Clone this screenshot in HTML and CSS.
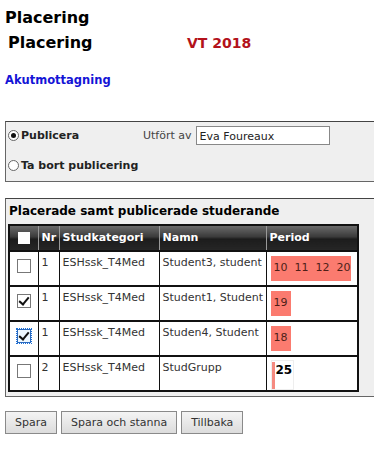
FILE: index.html
```html
<!DOCTYPE html>
<html lang="sv">
  <head>
    <meta charset="UTF-8" />
    <title>Placering</title>
    <link rel="stylesheet" href="styles.css">
  </head>
  <body>
    <h1 class="page-title">Placering</h1>
    <div class="title-row">
      <span class="title">Placering</span>
      <span class="term">VT 2018</span>
    </div>
    <a class="unit" href="#">Akutmottagning</a>

    <!-- Publicering -->
    <div class="box publish">
      <div class="publish-row">
        <label class="radio-label"><span class="radio checked"></span>Publicera</label>
        <label class="done-by">Utfört av <span class="text-input">Eva Foureaux</span></label>
      </div>
      <div class="publish-row">
        <label class="radio-label"><span class="radio"></span>Ta bort publicering</label>
      </div>
    </div>

    <!-- Studerande -->
    <div class="box students">
      <h2 class="box-title">Placerade samt publicerade studerande</h2>
      <table class="grid">
        <colgroup>
          <col class="col-check">
          <col class="col-nr">
          <col class="col-cat">
          <col class="col-name">
          <col class="col-period">
        </colgroup>
        <thead>
          <tr>
            <th class="cell-check"><span class="head-check"></span></th>
            <th>Nr</th>
            <th>Studkategori</th>
            <th>Namn</th>
            <th>Period</th>
          </tr>
        </thead>
        <tbody>
          <tr>
            <td class="cell-check"><span class="check"></span></td>
            <td>1</td>
            <td>ESHssk_T4Med</td>
            <td>Student3, student</td>
            <td class="cell-period"><span class="period wide">10&nbsp; 11&nbsp; 12&nbsp; 20</span></td>
          </tr>
          <tr>
            <td class="cell-check"><span class="check checked"></span></td>
            <td>1</td>
            <td>ESHssk_T4Med</td>
            <td>Student1, Student</td>
            <td class="cell-period"><span class="period">19</span></td>
          </tr>
          <tr>
            <td class="cell-check"><span class="check checked focused"></span></td>
            <td>1</td>
            <td>ESHssk_T4Med</td>
            <td>Studen4, Student</td>
            <td class="cell-period"><span class="period">18</span></td>
          </tr>
          <tr>
            <td class="cell-check"><span class="check"></span></td>
            <td>2</td>
            <td>ESHssk_T4Med</td>
            <td>StudGrupp</td>
            <td class="cell-period"><span class="period group"><i class="bar"></i>25</span></td>
          </tr>
        </tbody>
      </table>
    </div>

    <div class="actions">
      <button class="btn">Spara</button>
      <button class="btn">Spara och stanna</button>
      <button class="btn">Tillbaka</button>
    </div>
  </body>
</html>
```

FILE: styles.css
```css
html {
  overflow: hidden;
}

body {
  margin: 0;
  padding: 5px 0 0 5px;
  font-family: "DejaVu Sans", Verdana, sans-serif;
  font-size: 11px;
  color: #222;
  background: #fff;
}

.page-title {
  margin: 3px 0 0;
  font-size: 16px;
  line-height: 20px;
  color: #000;
}

.title-row {
  display: flex;
  align-items: baseline;
  margin: 5px 0 0 3px;
}

.title {
  width: 179px;
  font-size: 16px;
  font-weight: bold;
  line-height: 20px;
  color: #000;
}

.term {
  font-size: 14px;
  font-weight: bold;
  color: #b3121b;
}

.unit {
  display: block;
  margin-top: 20px;
  font-size: 11.5px;
  font-weight: bold;
  color: #1414d6;
  text-decoration: none;
}

/* boxes */
.box {
  background: #efefef;
  border-top: 1px solid #444;
  border-left: 1px solid #666;
  border-bottom: 1px solid #666;
}

.publish {
  margin-top: 34px;
  height: 61px;
  padding-top: 2px;
  box-sizing: border-box;
}

.publish-row {
  display: flex;
  align-items: center;
  height: 22px;
}

.publish-row + .publish-row {
  margin-top: 8px;
}

.radio-label {
  display: flex;
  align-items: center;
  width: 137px;
  font-weight: bold;
  font-size: 11px;
  color: #222;
}

.radio {
  width: 11px;
  height: 11px;
  margin: 0 2px 0 2px;
  border: 1px solid #666;
  border-radius: 50%;
  background: #fff;
  box-sizing: border-box;
  position: relative;
}

.radio.checked::after {
  content: "";
  position: absolute;
  left: 2px;
  top: 2px;
  width: 5px;
  height: 5px;
  border-radius: 50%;
  background: #111;
}

.done-by {
  display: flex;
  align-items: center;
  gap: 4px;
  color: #444;
}

.text-input {
  display: block;
  width: 134px;
  height: 19px;
  line-height: 19px;
  padding-left: 3px;
  box-sizing: border-box;
  background: #fff;
  border: 1px solid #888;
  color: #222;
}

.students {
  margin-top: 16px;
  padding: 4px 0 4px 2px;
}

.box-title {
  margin: 0 0 4px 1px;
  font-size: 12px;
  line-height: 17px;
  color: #000;
}

/* table */
.grid {
  table-layout: fixed;
  width: 349px;
  border-collapse: collapse;
  border: 2px solid #111;
  background: #fff;
  font-size: 11px;
  line-height: 14px;
}

.col-check { width: 29px; }
.col-nr { width: 21px; }
.col-cat { width: 100px; }
.col-name { width: 107px; }
.col-period { width: 92px; }

.grid thead tr {
  height: 26px;
}

.grid tbody tr {
  height: 35px;
}

.grid th {
  padding: 0 3px;
  text-align: left;
  font-weight: bold;
  color: #fff;
  background: linear-gradient(#6a6a6a 0%, #3a3a3a 45%, #1c1c1c 55%, #262626 100%);
  border-left: 1px solid #999;
  border-bottom: 1px solid #111;
}

.grid th:first-child {
  border-left: none;
}

.grid td {
  padding: 4px 3px 0;
  vertical-align: top;
  color: #333;
  border-left: 1px solid #111;
  border-top: 2px solid #111;
  white-space: nowrap;
  overflow: hidden;
}

.grid td:first-child {
  border-left: none;
}

.grid .cell-check {
  padding: 0;
  text-align: center;
}

.grid td.cell-check {
  padding-top: 7px;
}

.grid td.cell-period {
  padding: 4px 4px 0;
}

.head-check {
  display: block;
  width: 12px;
  height: 12px;
  margin: 0 auto;
  background: #fff;
}

.check {
  display: block;
  width: 12px;
  height: 12px;
  margin: 0 auto;
  border: 1px solid #777;
  background: #fff;
  position: relative;
}

.check.checked::after {
  content: "";
  position: absolute;
  left: 3px;
  top: 0px;
  width: 4px;
  height: 8px;
  border: solid #111;
  border-width: 0 2px 2px 0;
  transform: rotate(40deg);
}

.check.focused {
  outline: 1px dotted #1a6fd8;
  outline-offset: 0;
  border-color: #2a6ac0;
  background: #eef8ff;
}

.period {
  display: block;
  width: fit-content;
  height: 25px;
  padding: 5px 3px 0 3px;
  box-sizing: border-box;
  background: #fb7b6f;
  color: #4e1f18;
  font-size: 11px;
}

.period.wide {
  width: 80px;
}

.period.group {
  display: flex;
  align-items: flex-start;
  gap: 1px;
  width: 23px;
  height: 30px;
  margin-top: -1px;
  padding: 2px 0 0 0;
  background: #fff;
  border: 1px solid #eee;
  color: #000;
  font-weight: bold;
  font-size: 12px;
}

.bar {
  display: block;
  width: 3px;
  height: 27px;
  margin-top: -1px;
  background: #f58a80;
}

/* buttons */
.actions {
  display: flex;
  gap: 4px;
  margin-top: 14px;
}

.btn {
  height: 23px;
  padding: 0 9px;
  font-family: "DejaVu Sans", Verdana, sans-serif;
  font-size: 11px;
  color: #333;
  background: linear-gradient(#f4f4f4, #dcdcdc);
  border: 1px solid #8a8a8a;
  border-radius: 0;
}
```
